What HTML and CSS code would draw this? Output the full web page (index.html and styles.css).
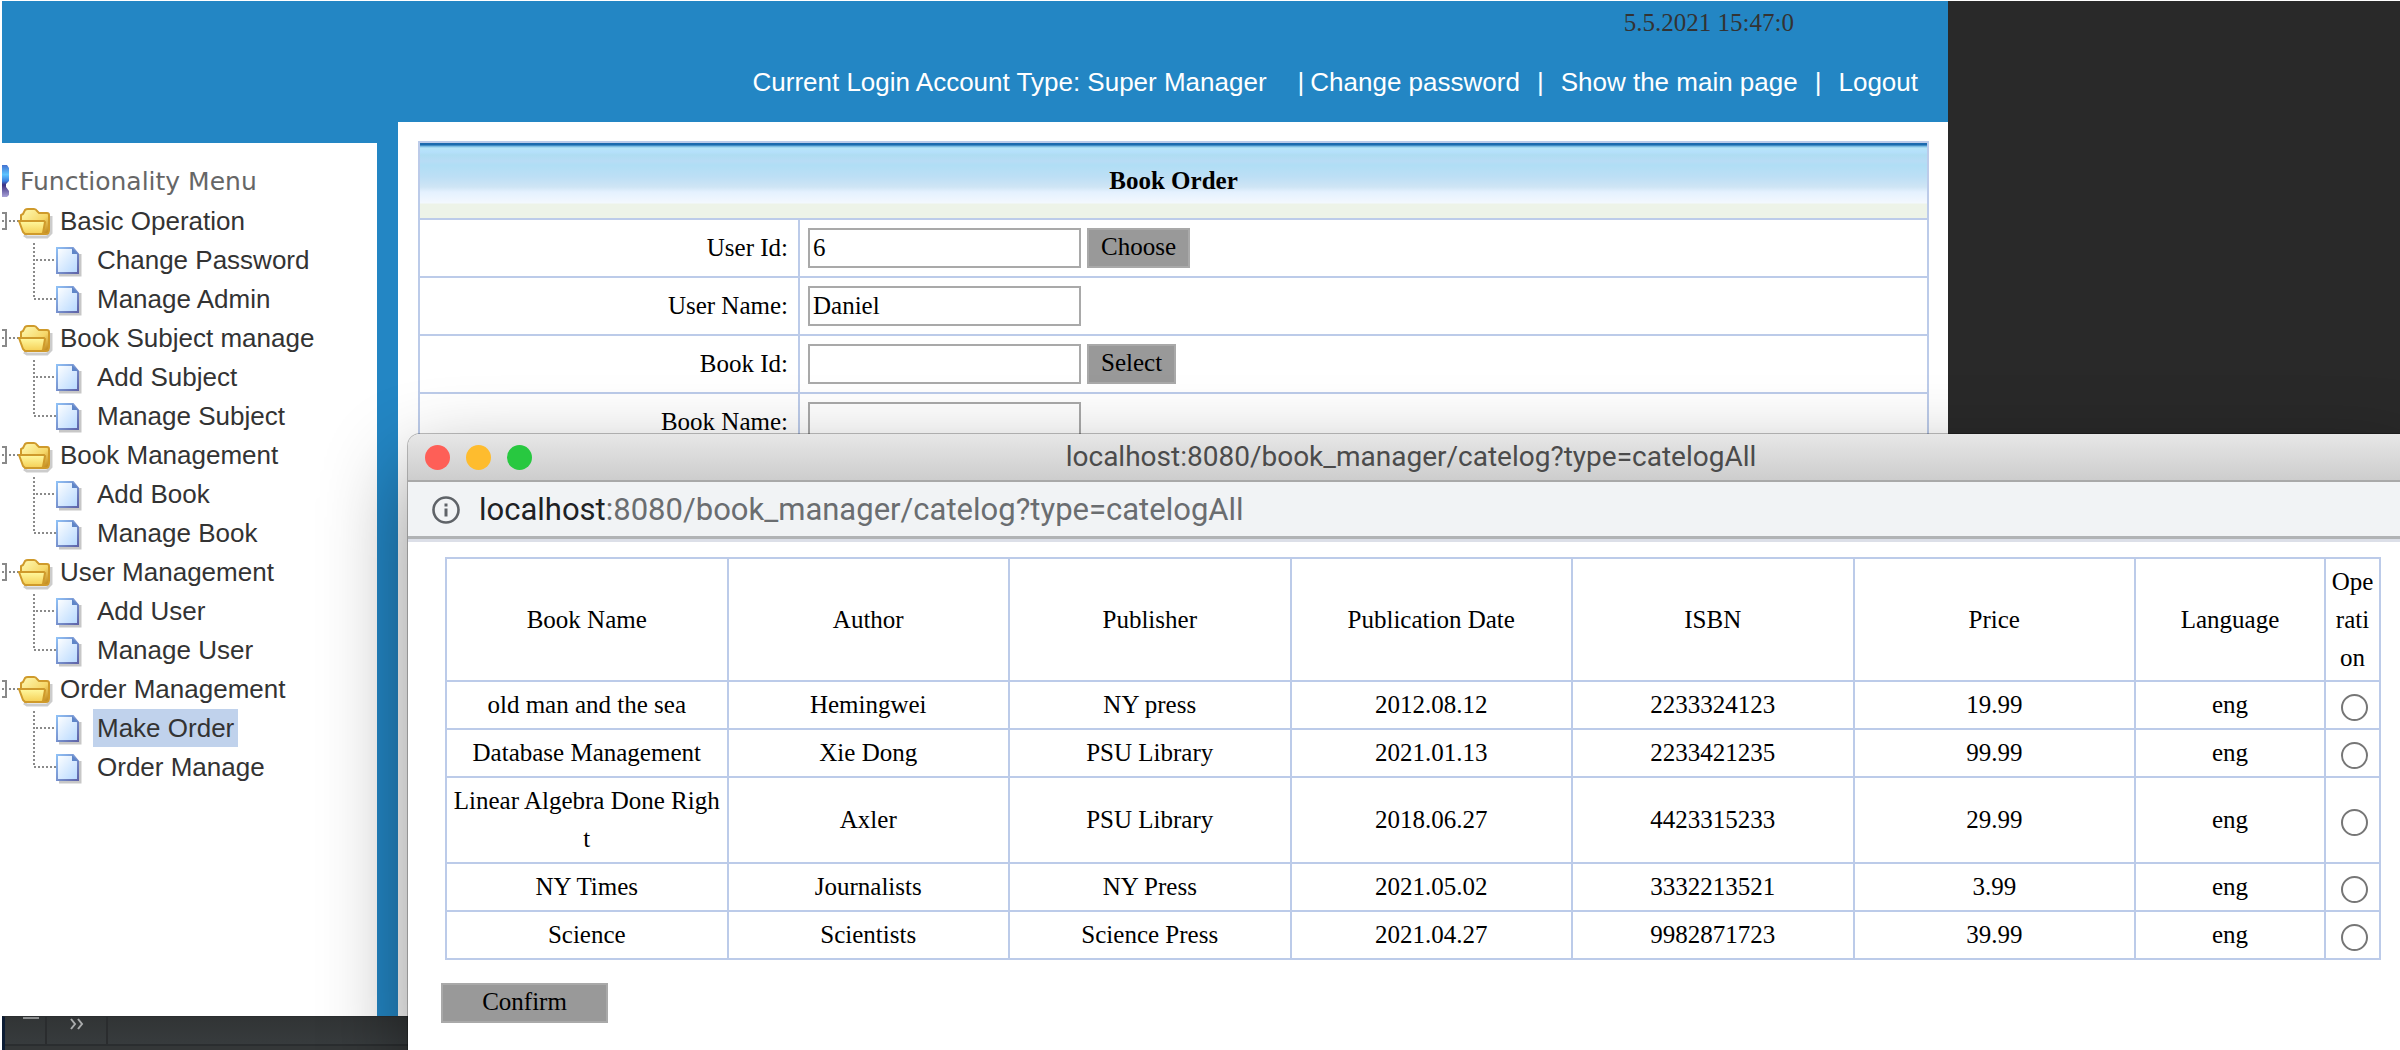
FILE: index.html
```html
<!DOCTYPE html>
<html lang="en">
<head>
<meta charset="utf-8">
<title>Book Order</title>
<link rel="stylesheet" href="styles.css">
</head>
<body>
<svg class="defs" aria-hidden="true">
  <defs>
    <linearGradient id="g-folder-back" x1="0" y1="0" x2="1" y2="1">
      <stop offset="0" stop-color="#fffbb5"/><stop offset=".6" stop-color="#f6d768"/><stop offset="1" stop-color="#b87d14"/>
    </linearGradient>
    <linearGradient id="g-folder" x1="0" y1="0" x2="0" y2="1">
      <stop offset="0" stop-color="#fff9a0"/><stop offset="1" stop-color="#f5cf55"/>
    </linearGradient>
    <linearGradient id="g-doc" x1="0" y1="0" x2="1" y2="1">
      <stop offset="0" stop-color="#ffffff"/><stop offset="1" stop-color="#b5d8ff"/>
    </linearGradient>
    <linearGradient id="g-doc-edge" x1="0" y1="0" x2="1" y2="1">
      <stop offset="0" stop-color="#8fc0f5"/><stop offset="1" stop-color="#5f64a8"/>
    </linearGradient>
    <linearGradient id="g-base" x1="0" y1="0" x2="0" y2="1">
      <stop offset="0" stop-color="#4472d0"/><stop offset=".3" stop-color="#5cc4ff"/><stop offset=".5" stop-color="#3a7fe0"/><stop offset=".62" stop-color="#3b2f80"/><stop offset="1" stop-color="#a9a2d8"/>
    </linearGradient>
    <symbol id="folder" viewBox="0 0 54 39">
      <path d="M0 12h4v16H0M0 20h2" fill="none" stroke="#8a8a8a" stroke-width="2"/>
      <path d="M7 20h11" stroke="#8a8a8a" stroke-width="2" stroke-dasharray="2 2"/>
      <path d="M22 34l3 2h20l4-4V15" fill="none" stroke="#000" stroke-opacity=".2" stroke-width="3"/>
      <path d="M19 20v-6l2-1 2-4q1-1 3-1h6q2 0 3 2l2 2h8q2 0 2 2v15q0 4-3 4H24z" fill="url(#g-folder-back)" stroke="#cf9a2b" stroke-width="2"/>
      <path d="M17 20h25l1 1-2 11-1 1H23l-2-2z" fill="url(#g-folder)" stroke="#cf9a2b" stroke-width="2"/>
    </symbol>
    <symbol id="page" viewBox="0 0 26 31">
      <path d="M3 29h21V8" fill="none" stroke="#000" stroke-opacity=".22" stroke-width="3"/>
      <path d="M1 2h16l5 6v19H1z" fill="url(#g-doc)" stroke="url(#g-doc-edge)" stroke-width="2"/>
      <path d="M16 2v6h6z" fill="#5f86c8"/>
    </symbol>
    <symbol id="branch" viewBox="0 0 82 39">
      <path d="M32 3v36" stroke="#8a8a8a" stroke-width="2" stroke-dasharray="2 2"/>
      <path d="M34 20h20" stroke="#8a8a8a" stroke-width="2" stroke-dasharray="2 2"/>
      <use href="#page" x="54" y="6" width="26" height="31"/>
    </symbol>
    <symbol id="branch-end" viewBox="0 0 82 39">
      <path d="M32 0v20" stroke="#8a8a8a" stroke-width="2" stroke-dasharray="2 2"/>
      <path d="M32 20h22" stroke="#8a8a8a" stroke-width="2" stroke-dasharray="2 2"/>
      <use href="#page" x="54" y="6" width="26" height="31"/>
    </symbol>
  </defs>
</svg>

<div class="desktop">
  <div class="app">
    <header class="top">
      <time class="clock">5.5.2021 15:47:0</time>
      <nav class="account">
        <span class="who">Current Login Account Type: Super Manager</span>
        <span class="first"><span>|</span><a href="#">Change password</a></span>
        <span>|</span>
        <a href="#">Show the main page</a>
        <span>|</span>
        <a href="#">Logout</a>
      </nav>
    </header>
    <aside class="side">
      <div class="row title">
        <svg class="base" viewBox="0 0 12 39"><path d="M0 3h5l2 3v13l-3 3v3l3 4v4l-2 2H0z" fill="url(#g-base)"/></svg>
        <span>Functionality Menu</span>
      </div>
      <div class="row"><svg class="i-folder"><use href="#folder"/></svg><span class="group">Basic Operation</span></div>
      <div class="row"><svg class="i-page"><use href="#branch"/></svg><a href="#">Change Password</a></div>
      <div class="row"><svg class="i-page"><use href="#branch-end"/></svg><a href="#">Manage Admin</a></div>
      <div class="row"><svg class="i-folder"><use href="#folder"/></svg><span class="group">Book Subject manage</span></div>
      <div class="row"><svg class="i-page"><use href="#branch"/></svg><a href="#">Add Subject</a></div>
      <div class="row"><svg class="i-page"><use href="#branch-end"/></svg><a href="#">Manage Subject</a></div>
      <div class="row"><svg class="i-folder"><use href="#folder"/></svg><span class="group">Book Management</span></div>
      <div class="row"><svg class="i-page"><use href="#branch"/></svg><a href="#">Add Book</a></div>
      <div class="row"><svg class="i-page"><use href="#branch-end"/></svg><a href="#">Manage Book</a></div>
      <div class="row"><svg class="i-folder"><use href="#folder"/></svg><span class="group">User Management</span></div>
      <div class="row"><svg class="i-page"><use href="#branch"/></svg><a href="#">Add User</a></div>
      <div class="row"><svg class="i-page"><use href="#branch-end"/></svg><a href="#">Manage User</a></div>
      <div class="row"><svg class="i-folder"><use href="#folder"/></svg><span class="group">Order Management</span></div>
      <div class="row"><svg class="i-page"><use href="#branch"/></svg><a class="selected" href="#">Make Order</a></div>
      <div class="row"><svg class="i-page"><use href="#branch-end"/></svg><a href="#">Order Manage</a></div>
    </aside>
    <main class="content">
      <form>
        <table class="order">
          <colgroup><col class="c-label"><col></colgroup>
          <thead><tr><th colspan="2">Book Order</th></tr></thead>
          <tbody>
            <tr><td><label for="uid">User Id:</label></td><td><div class="field"><input id="uid" type="text" value="6"><button type="button">Choose</button></div></td></tr>
            <tr><td><label for="uname">User Name:</label></td><td><div class="field"><input id="uname" type="text" value="Daniel"></div></td></tr>
            <tr><td><label for="bid">Book Id:</label></td><td><div class="field"><input id="bid" type="text"><button type="button">Select</button></div></td></tr>
            <tr><td><label for="bname">Book Name:</label></td><td><div class="field"><input id="bname" type="text"></div></td></tr>
          </tbody>
        </table>
      </form>
    </main>
  </div>
  <footer class="dock">
    <div class="cell small"><i></i></div>
    <div class="cell wide"><svg viewBox="0 0 16 12"><path d="M2 1l4 5-4 5M9 1l4 5-4 5" fill="none" stroke="#a9abac" stroke-width="2"/></svg></div>
  </footer>

  <section class="popup">
    <div class="titlebar">
      <div class="lights"><i class="red"></i><i class="amber"></i><i class="green"></i></div>
      <span>localhost:8080/book_manager/catelog?type=catelogAll</span>
    </div>
    <div class="address">
      <svg viewBox="0 0 28 28"><circle cx="14" cy="14" r="12.5" fill="none" stroke="#5f6368" stroke-width="2.6"/><path d="M14 12.500v8" stroke="#5f6368" stroke-width="3"/><path d="M14 7.500v3" stroke="#5f6368" stroke-width="3"/></svg>
      <span><b>localhost</b>:8080/book_manager/catelog?type=catelogAll</span>
    </div>
    <form class="picker">
      <table class="books">
        <colgroup><col span="6"><col class="c-lang"><col class="c-op"></colgroup>
        <thead>
          <tr><th>Book Name</th><th>Author</th><th>Publisher</th><th>Publication Date</th><th>ISBN</th><th>Price</th><th>Language</th><th>Operation</th></tr>
        </thead>
        <tbody>
          <tr><td>old man and the sea</td><td>Hemingwei</td><td>NY press</td><td>2012.08.12</td><td>2233324123</td><td>19.99</td><td>eng</td><td><input type="radio" name="book" aria-label="old man and the sea"></td></tr>
          <tr><td>Database Management</td><td>Xie Dong</td><td>PSU Library</td><td>2021.01.13</td><td>2233421235</td><td>99.99</td><td>eng</td><td><input type="radio" name="book" aria-label="Database Management"></td></tr>
          <tr><td>Linear Algebra Done Right</td><td>Axler</td><td>PSU Library</td><td>2018.06.27</td><td>4423315233</td><td>29.99</td><td>eng</td><td><input type="radio" name="book" aria-label="Linear Algebra Done Right"></td></tr>
          <tr><td>NY Times</td><td>Journalists</td><td>NY Press</td><td>2021.05.02</td><td>3332213521</td><td>3.99</td><td>eng</td><td><input type="radio" name="book" aria-label="NY Times"></td></tr>
          <tr><td>Science</td><td>Scientists</td><td>Science Press</td><td>2021.04.27</td><td>9982871723</td><td>39.99</td><td>eng</td><td><input type="radio" name="book" aria-label="Science"></td></tr>
        </tbody>
      </table>
      <button class="confirm" type="button">Confirm</button>
    </form>
  </section>
</div>
</body>
</html>
```
FILE: styles.css
```css
* { box-sizing: border-box; }

body {
  margin: 0;
  padding: 1px 0 0 2px;
  background: #fff;
  color: #000;
  font-family: "Liberation Serif", "Times New Roman", serif;
  font-size: 25px;
}

.defs { display: block; width: 0; height: 0; position: absolute; }

.desktop {
  position: relative;
  display: grid;
  grid-template-rows: 1fr auto;
  min-height: calc(100vh - 1px);
  overflow: hidden;
  background: #292929;
}

/* main application page */
.app {
  display: grid;
  grid-template-columns: 375px 1fr;
  grid-template-rows: 121px 1fr;
  margin-right: 452px;
  background: #2386c4;
}

.top {
  grid-column: 1 / -1;
  display: flex;
  flex-direction: column;
  align-items: flex-end;
  padding: 8px 30px 0 0;
}

.clock {
  margin-right: 124px;
  line-height: 28px;
  color: #333;
}

.account {
  display: flex;
  gap: 17px;
  margin-top: 30px;
  font: 26px/30px "Liberation Sans", Arial, sans-serif;
  color: #fff;
}

.account a { color: #fff; text-decoration: none; }
.who { margin-right: 14px; }
.first { display: flex; gap: 6px; }

.side {
  margin-top: 21px;
  padding-top: 19px;
  background: #fff;
  font: 26px/38px "Liberation Sans", Arial, sans-serif;
  color: #333;
}

.row { display: flex; height: 39px; align-items: center; }
.row svg { flex: none; height: 39px; }
.title { font: 25px/38px "DejaVu Sans", Verdana, sans-serif; color: #666; }
.base { width: 12px; }
.title span { padding-left: 6px; }
.i-folder { width: 54px; }
.i-page { width: 82px; }
.group { padding: 0 4px; }
.row a {
  margin-left: 9px;
  padding: 0 4px;
  color: #333;
  text-decoration: none;
}
.row a.selected { background: #c0d2ec; }

.content {
  margin-left: 21px;
  padding: 19px 19px 0 20px;
  background: #fff;
}

table {
  width: 100%;
  table-layout: fixed;
  border-collapse: collapse;
}

th, td { border: 2px solid #bccbe9; }

.c-label { width: 380px; }

.order th {
  height: 77px;
  padding: 0;
  background: linear-gradient(#1b6aae 0 2px, #6ab0dc 3px, #b8e6f8 5px, #b5e0fb 9px, #afddf2 12px, #b8dcf5 18px, #b0def5 22px, #bddff5 34px, #cfe5f5 44px, #e4f1fe 49px, #f3f8fe 60px, #edf3e8 61px);
}

.order td { padding: 8px; }
.order td:first-child { padding-right: 10px; text-align: right; }

.field { display: flex; gap: 6px; }

.field input {
  width: 273px;
  height: 40px;
  padding: 0 3px;
  border: 2px solid #a9a9a9;
  background: transparent;
  font: inherit;
  color: #000;
}

button {
  height: 40px;
  padding: 0 12px 2px;
  border: 2px solid #a9a9a9;
  background: #999;
  font: inherit;
  line-height: 34px;
  color: #000;
}

/* dark tool strip under the application */
.dock {
  display: flex;
  height: 34px;
  border-left: 3px solid #0c1c33;
  border-top: 1px solid #2b2e30;
  background: linear-gradient(#313435, #373b3d 27px, #2a2d2f 27px 29px, #343738 29px);
}

.cell { height: 27px; border-right: 2px solid #2a2c2e; }
.small { width: 42px; padding-left: 18px; }
.small i { display: block; width: 16px; height: 2px; background: #8d8f90; }
.wide { width: 61px; padding-left: 22px; }
.wide svg { display: block; width: 16px; height: 12px; margin-top: 1px; }

/* floating browser window */
.popup {
  position: absolute;
  top: 433px;
  right: -14px;
  bottom: 0;
  left: 406px;
  background: #fff;
  border-radius: 12px 12px 0 0;
  box-shadow: 0 0 0 1px rgba(0, 0, 0, .25), 0 34px 84px rgba(0, 0, 0, .45);
}

.titlebar {
  display: grid;
  grid-template-columns: 1fr auto 1fr;
  align-items: center;
  height: 48px;
  border-bottom: 2px solid #a9a9a9;
  border-radius: 12px 12px 0 0;
  background: linear-gradient(#e7e7e7, #cdcdcd);
  color: #4b4b4b;
  font: 28px/32px Roboto, sans-serif;
}

.lights { display: flex; gap: 16px; padding-left: 17px; }
.lights i { width: 25px; height: 25px; border-radius: 50%; }
.red { background: #fe5f57; }
.amber { background: #febc2e; }
.green { background: #28c840; }

.address {
  display: flex;
  align-items: center;
  gap: 19px;
  height: 60px;
  padding: 0 24px 2px;
  border-bottom: 3px solid #dcdfe8;
  background: #f1f3f5;
  box-shadow: inset 0 -3px #b1b3b5;
  color: #6a6d70;
  font: 31px/36px Roboto, sans-serif;
}
.address svg { width: 28px; height: 28px; }
.address b { font-weight: 400; color: #202124; }

.picker { padding: 15px 33px 0; }

.c-lang { width: 190px; }
.c-op { width: 55px; }

.books { margin-left: 4px; width: calc(100% - 4px); }

.books th, .books td {
  padding: 4px;
  font-weight: 400;
  line-height: 38px;
  text-align: center;
  word-break: break-all;
}
.books th { padding-bottom: 3px; }

.books input {
  display: block;
  appearance: none;
  width: 27px;
  height: 27px;
  margin: 4px 7px 0 auto;
  border: 2px solid #767676;
  border-radius: 50%;
  background: #fff;
}

.confirm { width: 167px; margin-top: 23px; }
```
